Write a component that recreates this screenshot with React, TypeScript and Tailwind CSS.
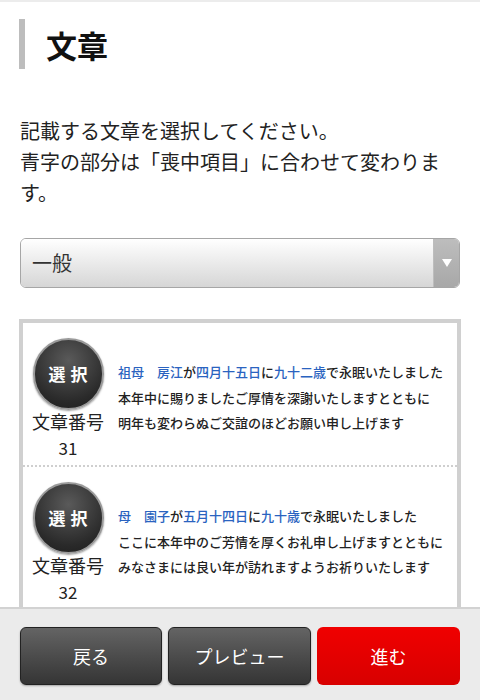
const font = "font-['Noto_Sans_CJK_JP','Noto_Sans',sans-serif]";

interface Item {
  no: number;
  lines: { t: string; blue?: boolean }[][];
}

const items: Item[] = [
  {
    no: 31,
    lines: [
      [
        { t: '祖母　房江', blue: true },
        { t: 'が' },
        { t: '四月十五日', blue: true },
        { t: 'に' },
        { t: '九十二歳', blue: true },
        { t: 'で永眠いたしました' },
      ],
      [{ t: '本年中に賜りましたご厚情を深謝いたしますとともに' }],
      [{ t: '明年も変わらぬご交誼のほどお願い申し上げます' }],
    ],
  },
  {
    no: 32,
    lines: [
      [
        { t: '母　園子', blue: true },
        { t: 'が' },
        { t: '五月十四日', blue: true },
        { t: 'に' },
        { t: '九十歳', blue: true },
        { t: 'で永眠いたしました' },
      ],
      [{ t: 'ここに本年中のご芳情を厚くお礼申し上げますとともに' }],
      [{ t: 'みなさまには良い年が訪れますようお祈りいたします' }],
    ],
  },
];

function SentenceRow({ item, last }: { item: Item; last: boolean }) {
  return (
    <div
      className={`flex pl-[7px] pt-[15px] pb-[7px] ${
        last ? '' : 'border-b-2 border-dotted border-[#cfcfcf]'
      }`}
    >
      <div className="w-[76px] flex flex-col items-center shrink-0">
        <button className="w-[71px] h-[72px] rounded-full bg-[radial-gradient(circle_at_50%_30%,#5a5a5a,#2a2a2a_70%,#1c1c1c)] border-[2px] border-[#9a9a9a] shadow-[0_1px_2px_rgba(0,0,0,0.4)] flex items-center justify-center text-white font-bold text-[17px] tracking-[5px] pl-[5px]">
          選択
        </button>
        <div className="mt-[1px] text-[18px] leading-[21px] text-[#222] whitespace-nowrap">
          文章番号
        </div>
        <div className="mt-[5px] text-[17px] leading-[21px] text-[#222]">{item.no}</div>
      </div>
      <div className="ml-[12px] mt-[21px] text-[13px] leading-[25.5px] font-medium text-[#222] whitespace-nowrap">
        {item.lines.map((line, i) => (
          <div key={i}>
            {line.map((s, j) => (
              <span key={j} className={s.blue ? 'text-[#2a63c0]' : ''}>
                {s.t}
              </span>
            ))}
          </div>
        ))}
      </div>
    </div>
  );
}

export default function App() {
  return (
    <div className={`${font} h-[700px] w-[480px] flex flex-col bg-white overflow-hidden`}>
      <div className="flex-1 overflow-hidden border-t-2 border-[#ececec]">
        <div className="flex items-center mt-[17px] ml-[19px]">
          <div className="w-[6px] h-[50px] bg-[#bdbdbd]" />
          <h1 className="ml-[21px] text-[31px] font-bold text-[#111] leading-none">文章</h1>
        </div>

        <p className="mt-[46px] px-[20px] text-[20px] leading-[31px] text-[#222]">
          記載する文章を選択してください。
          <br />
          青字の部分は「喪中項目」に合わせて変わります。
        </p>

        <div className="mx-[20px] mt-[30px] h-[50px] flex rounded-[6px] border border-[#a6a6a6] overflow-hidden">
          <div className="flex-1 flex items-center pl-[11px] text-[20px] text-[#333] bg-gradient-to-b from-white to-[#d6d6d6]">
            一般
          </div>
          <div className="w-[26px] flex items-center justify-center bg-gradient-to-b from-[#bdbdbd] to-[#a8a8a8] border-l border-[#bdbdbd]">
            <svg width="10" height="8" viewBox="0 0 10 8">
              <path d="M0 0 H10 L5 8 Z" fill="#fff" />
            </svg>
          </div>
        </div>

        <div className="mx-[19px] mt-[31px] border-[4px] border-b-0 border-[#d0d0d0] pb-[40px]">
          {items.map((it, i) => (
            <SentenceRow key={it.no} item={it} last={i === items.length - 1} />
          ))}
        </div>
      </div>

      <div className="h-[93px] shrink-0 bg-[#ebebeb] border-t-2 border-[#d2d2d2] flex gap-[6px] px-[20px] pt-[18px]">
        <button className="w-[142px] h-[58px] rounded-[6px] border border-[#222] bg-gradient-to-b from-[#646464] to-[#353535] text-white text-[18px] shadow-[0_1px_2px_rgba(0,0,0,0.3)]">
          戻る
        </button>
        <button className="w-[143px] h-[58px] rounded-[6px] border border-[#222] bg-gradient-to-b from-[#646464] to-[#353535] text-white text-[18px] shadow-[0_1px_2px_rgba(0,0,0,0.3)]">
          プレビュー
        </button>
        <button className="w-[143px] h-[58px] rounded-[6px] bg-gradient-to-b from-[#f00000] to-[#d80000] text-white text-[18px]">
          進む
        </button>
      </div>
    </div>
  );
}
